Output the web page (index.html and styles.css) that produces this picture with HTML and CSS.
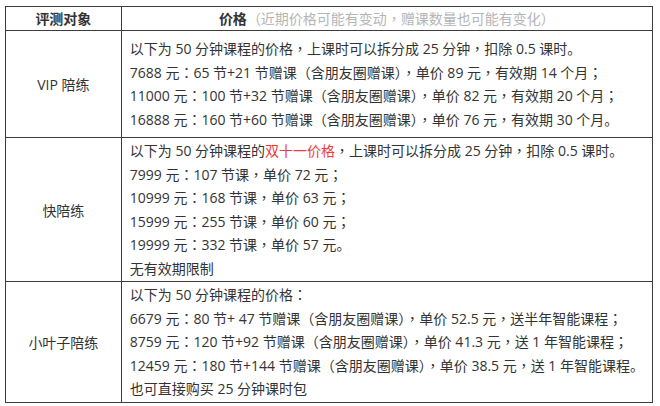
FILE: index.html
```html
<!DOCTYPE html>
<html lang="zh-CN">
<head>
<meta charset="utf-8">
<link rel="stylesheet" href="styles.css">
</head>
<body>
<table class="price-table">
  <colgroup>
    <col class="col-name">
    <col class="col-price">
  </colgroup>
  <thead>
    <tr class="head-row">
      <th>评测对象</th>
      <th>价格<span class="note">（近期价格可能有变动<span class="cp" lang="zh-TW">，</span>赠课数量也可能有变化）</span></th>
    </tr>
  </thead>
  <tbody>
    <tr class="row-vip">
      <td class="name">VIP 陪练</td>
      <td class="detail">
        <div class="line">以下为 50 分钟课程的价格<span class="cp" lang="zh-TW">，</span>上课时可以拆分成 25 分钟<span class="cp" lang="zh-TW">，</span>扣除 0.5 课时。</div>
        <div class="line">7688 元<span class="cp" lang="zh-TW">：</span>65 节+21 节赠课（含朋友圈赠课）<span class="cp" lang="zh-TW">，</span>单价 89 元<span class="cp" lang="zh-TW">，</span>有效期 14 个月<span class="cp" lang="zh-TW">；</span></div>
        <div class="line">11000 元<span class="cp" lang="zh-TW">：</span>100 节+32 节赠课（含朋友圈赠课）<span class="cp" lang="zh-TW">，</span>单价 82 元<span class="cp" lang="zh-TW">，</span>有效期 20 个月<span class="cp" lang="zh-TW">；</span></div>
        <div class="line">16888 元<span class="cp" lang="zh-TW">：</span>160 节+60 节赠课（含朋友圈赠课）<span class="cp" lang="zh-TW">，</span>单价 76 元<span class="cp" lang="zh-TW">，</span>有效期 30 个月。</div>
      </td>
    </tr>
    <tr class="row-kuai">
      <td class="name">快陪练</td>
      <td class="detail">
        <div class="line">以下为 50 分钟课程的<span class="hot">双十一价格</span><span class="cp" lang="zh-TW">，</span>上课时可以拆分成 25 分钟<span class="cp" lang="zh-TW">，</span>扣除 0.5 课时。</div>
        <div class="line">7999 元<span class="cp" lang="zh-TW">：</span>107 节课<span class="cp" lang="zh-TW">，</span>单价 72 元<span class="cp" lang="zh-TW">；</span></div>
        <div class="line">10999 元<span class="cp" lang="zh-TW">：</span>168 节课<span class="cp" lang="zh-TW">，</span>单价 63 元<span class="cp" lang="zh-TW">；</span></div>
        <div class="line">15999 元<span class="cp" lang="zh-TW">：</span>255 节课<span class="cp" lang="zh-TW">，</span>单价 60 元<span class="cp" lang="zh-TW">；</span></div>
        <div class="line">19999 元<span class="cp" lang="zh-TW">：</span>332 节课<span class="cp" lang="zh-TW">，</span>单价 57 元。</div>
        <div class="line">无有效期限制</div>
      </td>
    </tr>
    <tr class="row-xyz">
      <td class="name">小叶子陪练</td>
      <td class="detail">
        <div class="line">以下为 50 分钟课程的价格<span class="cp" lang="zh-TW">：</span></div>
        <div class="line">6679 元<span class="cp" lang="zh-TW">：</span>80 节+ 47 节赠课（含朋友圈赠课）<span class="cp" lang="zh-TW">，</span>单价 52.5 元<span class="cp" lang="zh-TW">，</span>送半年智能课程<span class="cp" lang="zh-TW">；</span></div>
        <div class="line">8759 元<span class="cp" lang="zh-TW">：</span>120 节+92 节赠课（含朋友圈赠课）<span class="cp" lang="zh-TW">，</span>单价 41.3 元<span class="cp" lang="zh-TW">，</span>送 1 年智能课程<span class="cp" lang="zh-TW">；</span></div>
        <div class="line">12459 元<span class="cp" lang="zh-TW">：</span>180 节+144 节赠课（含朋友圈赠课）<span class="cp" lang="zh-TW">，</span>单价 38.5 元<span class="cp" lang="zh-TW">，</span>送 1 年智能课程。</div>
        <div class="line">也可直接购买 25 分钟课时包</div>
      </td>
    </tr>
  </tbody>
</table>
</body>
</html>
```

FILE: styles.css
```css
html, body {
  margin: 0;
  padding: 0;
  background: #ffffff;
}

body {
  font-family: "Open Sans", "Noto Sans CJK SC", sans-serif;
  font-size: 14px;
  color: #333333;
}

.price-table {
  margin: 6px 0 0 5px;
  width: 648px;
  border-collapse: collapse;
  border: 1px solid #3c3c3c;
}

.col-name {
  width: 121px;
}

.price-table th,
.price-table td {
  border: 1px solid #3c3c3c;
}

.head-row th {
  height: 23px;
  padding: 0;
  font-weight: bold;
  text-align: center;
  line-height: 23px;
  color: #333333;
}

.note {
  font-weight: normal;
  color: #b5b5b5;
}

.cp {
  font-family: "Noto Sans CJK TC", sans-serif;
}

.name {
  text-align: center;
  vertical-align: middle;
  padding: 0;
}

.detail {
  padding: 1px 8px;
  vertical-align: middle;
}

.line {
  line-height: 23.5px;
  white-space: nowrap;
}

.row-vip td {
  height: 104px;
}

.hot {
  color: #ee3a3a;
}
```
